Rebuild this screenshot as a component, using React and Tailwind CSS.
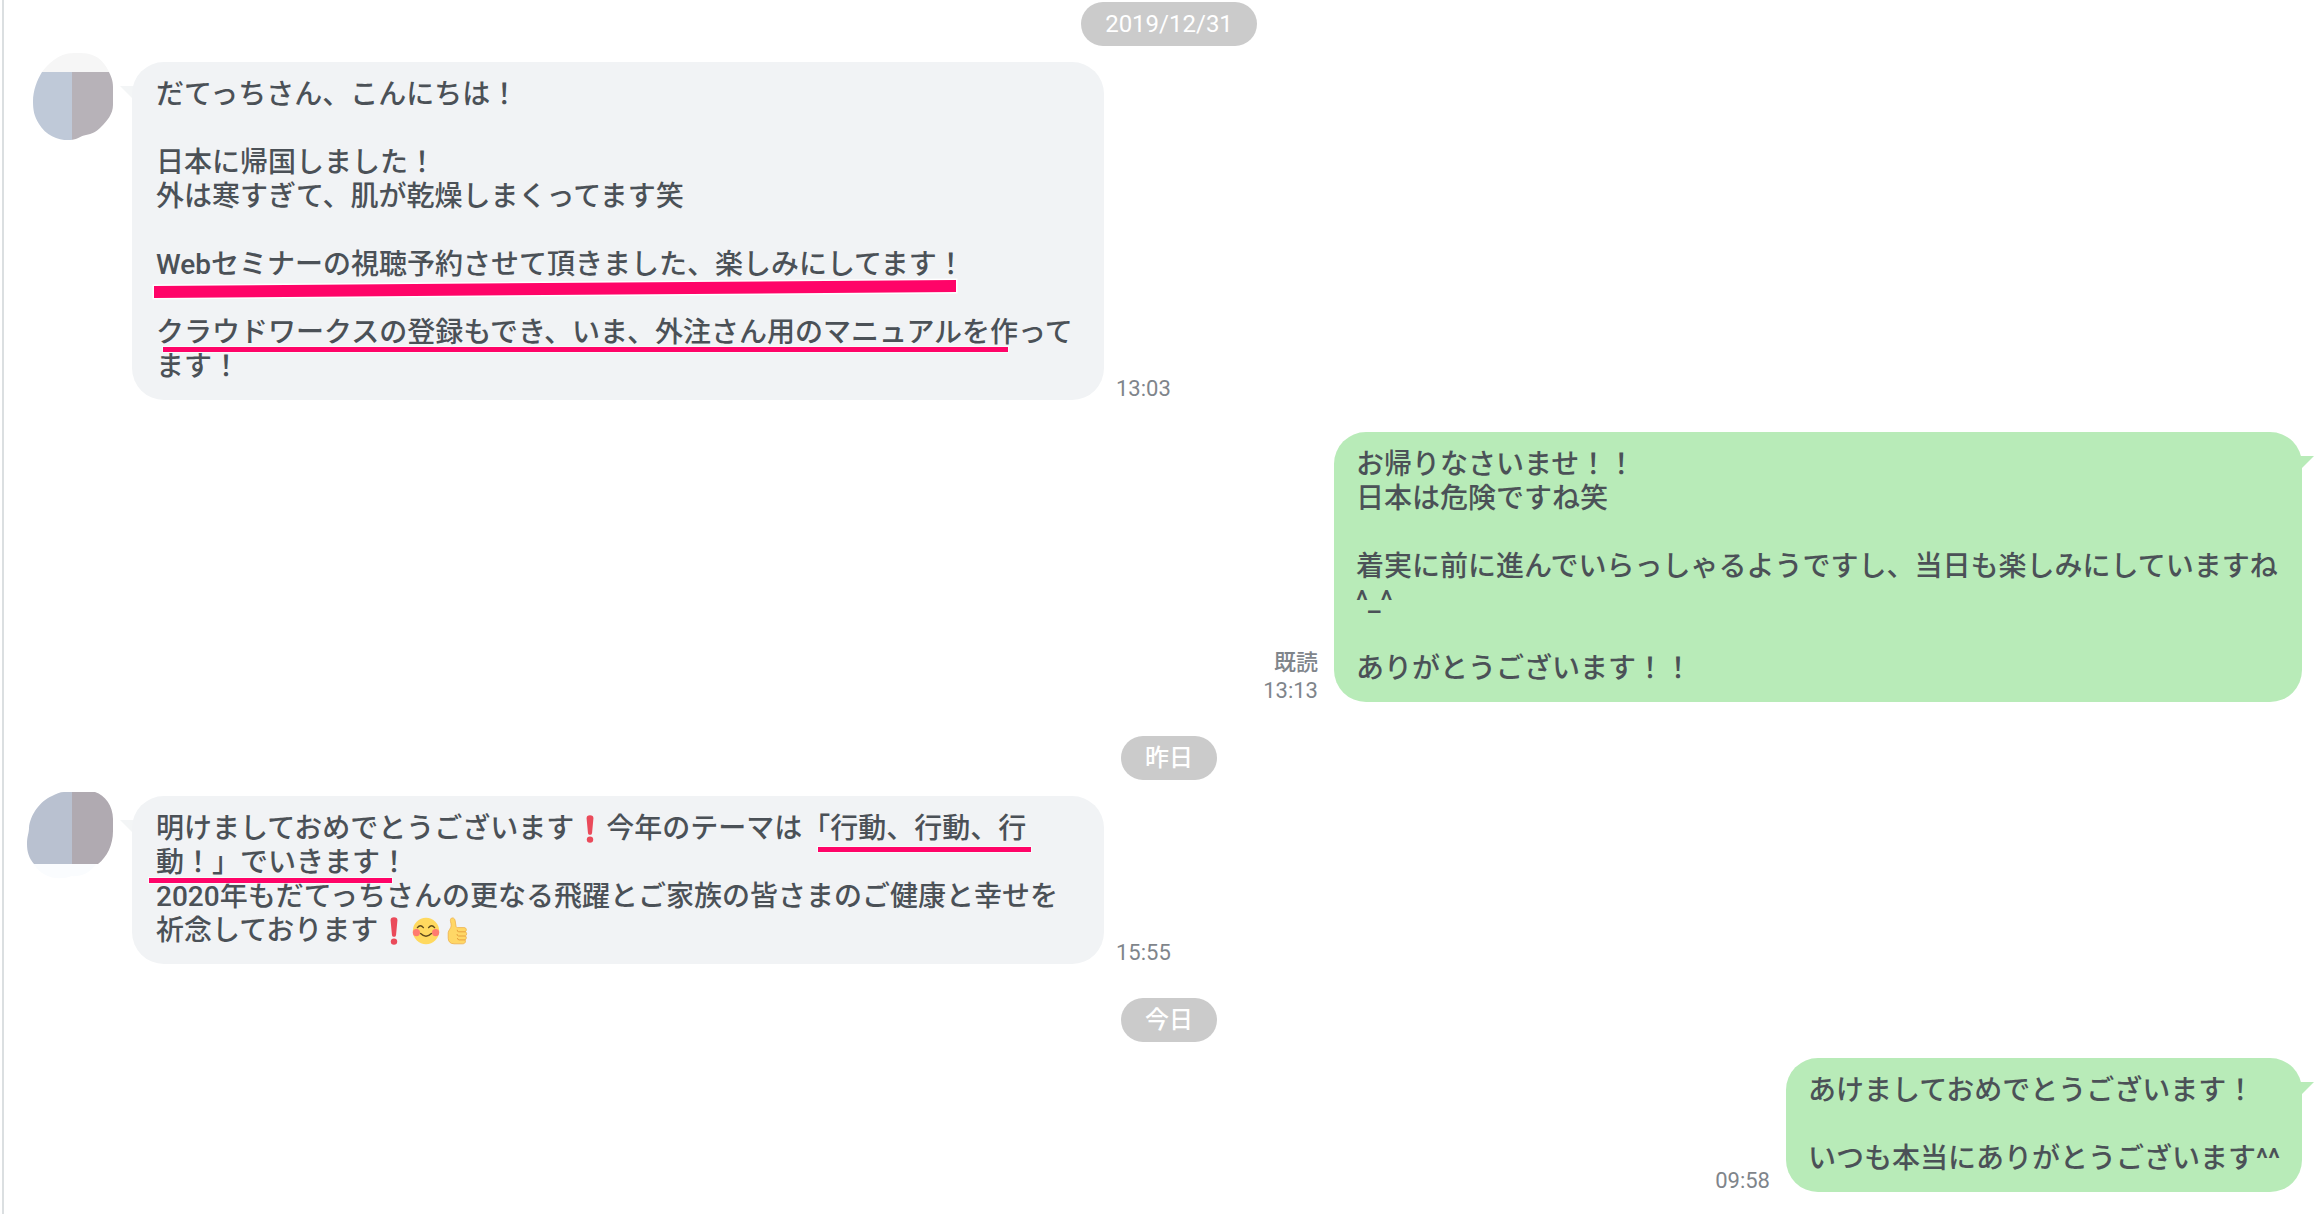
const PINK = "#ff0468";

function Exclamation() {
  return (
    <svg viewBox="0 0 32 28" role="img" aria-label="!" className="inline-block h-7 w-8 align-[-5px]">
      <path d="M12.6 3.4C12.4 1 13.8 0.2 16 0.2s3.6.8 3.4 3.2l-1.3 14c-.2 1.9-1 2.4-2.1 2.4s-1.9-.5-2.1-2.4z" fill="#ea4a5a" />
      <circle cx="16" cy="24.6" r="3.2" fill="#ea4a5a" />
    </svg>
  );
}

function Smile() {
  return (
    <svg viewBox="0 0 32 28" role="img" aria-label="smile" className="inline-block h-7 w-8 align-[-5px]">
      <circle cx="16" cy="14" r="13.2" fill="#ffd95f" />
      <circle cx="6.4" cy="15.6" r="3.6" fill="#ff7b70" />
      <circle cx="25.6" cy="15.6" r="3.6" fill="#ff7b70" />
      <g fill="none" stroke="#5f4a1c" strokeWidth="1.4" strokeLinecap="round">
        <path d="M7.4 10.6q3-3.6 6 0M18.6 10.6q3-3.6 6 0" />
        <path d="M10.6 16.6q5.4 5.4 10.8 0" />
      </g>
    </svg>
  );
}

function ThumbsUp() {
  return (
    <svg viewBox="0 0 32 28" role="img" aria-label="thumbs up" className="inline-block h-7 w-8 align-[-5px]">
      <path
        d="M9.4 1.2c1.6-.8 3.4.2 3.7 2.2l.9 5.8c.2 1 .7 1.4 1.6 1.4h6.3c1.7 0 2.4 1 2.4 2.1s-.4 1.7-1 2.1c1.1.4 1.4 1.2 1.3 2.2s-.5 1.7-1.2 2c.8.5 1 1.2.9 2.1-.1.9-.6 1.5-1.3 1.8.5.5.6 1.1.4 1.9-.3 1.3-1.3 2-2.8 2H12c-3.6 0-5.8-2.2-5.8-5.6v-5.4c0-2.2 2.8-4.6 3-6.9.1-1.6-.4-3-.7-4.4-.3-1.5 0-2.7.9-3.3z"
        fill="#ffd766"
        stroke="#eeb04a"
        strokeWidth="0.8"
      />
      <path
        d="M23 14.8h-6.2q-1.6.1-1.6-1.6M23.2 19h-6.6q-1.6-.1-1.6-1.6M22.8 22.9h-5.6q-1.7-.1-1.8-1.5"
        fill="none"
        stroke="#e8a23e"
        strokeWidth="1"
        strokeLinecap="round"
      />
    </svg>
  );
}

function AvatarMorning() {
  return (
    <svg viewBox="36 40 96 100" aria-hidden="true" className="-mt-[22px] h-[100px] w-24 shrink-0 overflow-visible">
      <clipPath id="avatar-a">
        <path d="M66 54C71 52.6 84 52.6 89 54C98 56 104 62 108 70C111 76 113 80 113 87V105C113 114 107 121 101 127C96 132 92 134 86 135C80 136 79 139 71 140C60 141 46 136 39 124C34 116 33 110 33 101C33 91 37 80 42 72C48 64 57 56 66 54Z" />
      </clipPath>
      <g clipPath="url(#avatar-a)">
        <rect x="30" y="50" width="90" height="22" fill="#f6f6f6" />
        <rect x="30" y="72" width="42" height="70" fill="#bfc9d8" />
        <rect x="72" y="72" width="44" height="70" fill="#b7b2b8" />
      </g>
      <path d="M120 86h18l-6 12z" fill="#f3f5f6" />
    </svg>
  );
}

function AvatarEvening() {
  return (
    <svg viewBox="36 774 96 100" aria-hidden="true" className="-mt-[22px] h-[100px] w-24 shrink-0 overflow-visible">
      <path d="M34 864h62C90 874 78 877 72 876C58 881 42 878 34 864Z" fill="#fafcfe" />
      <clipPath id="avatar-b">
        <path d="M64 792H95C105 795 113 806 113 819V831C113 845 107 857 98 864H34C29 858 27 852 27 844C27 836 29 833 29 828C30 815 40 801 52 796C56 794 60 792 64 792Z" />
      </clipPath>
      <g clipPath="url(#avatar-b)">
        <rect x="24" y="790" width="48" height="76" fill="#b9c1d0" />
        <rect x="72" y="790" width="44" height="76" fill="#b0aab1" />
      </g>
      <path d="M120 820h18l-6 12z" fill="#f3f5f6" />
    </svg>
  );
}

function DateDivider({ children }) {
  return (
    <div className="flex justify-center">
      <span className="rounded-full bg-[#cbcbcb] px-6 text-[24px] leading-[44px] text-white">{children}</span>
    </div>
  );
}

function Received({ avatar, time, marks, children }) {
  return (
    <div className="mt-4 flex items-start">
      {avatar}
      <div className="flex items-end gap-3">
        <div className="relative max-w-[972px] rounded-[32px] bg-[#f1f3f5] px-6 py-4">
          <p className="whitespace-pre-line">{children}</p>
          <svg aria-hidden="true" className="pointer-events-none absolute inset-0 h-full w-full">
            {marks}
          </svg>
        </div>
        <time className="-mb-[3px] text-[22px] leading-7 font-normal text-[#7f858b]">{time}</time>
      </div>
    </div>
  );
}

function Sent({ time, read, children }) {
  return (
    <div className="flex items-end justify-end gap-4">
      <div className="-mb-[3px] shrink-0 text-right text-[22px] leading-7 text-[#7f858b]">
        {read && <p>既読</p>}
        <time className="font-normal">{time}</time>
      </div>
      <div className="relative max-w-[968px] rounded-[32px] bg-[#b8ebb8] px-[22px] py-4">
        <p className="whitespace-pre-line">{children}</p>
        <svg viewBox="0 0 18 12" aria-hidden="true" className="absolute top-6 -right-3 h-3 w-[18px]">
          <path d="M0 0h18L6 12z" fill="#b8ebb8" />
        </svg>
      </div>
    </div>
  );
}

export default function App() {
  return (
    <main className="ml-[2px] min-h-screen border-l-2 border-[#dbdfe1] bg-white pt-[2px] pr-[18px] pb-5 pl-8 font-['Roboto','Noto_Sans_CJK_JP',sans-serif] text-[28px] leading-[34px] font-medium text-[#4b5157]" lang="ja">
      <DateDivider>
        <time className="font-normal">2019/12/31</time>
      </DateDivider>

      <Received
        avatar={<AvatarMorning />}
        time="13:03"
        marks={
          <>
            <path d="M22 224L824 218V230L22 236Z" fill={PINK} stroke="#fff" strokeWidth="3" paintOrder="stroke" />
            <path d="M31 285H876V290H31Z" fill={PINK} stroke="#fff" strokeOpacity="0.6" strokeWidth="2" paintOrder="stroke" />
          </>
        }
      >
        {`だてっちさん、こんにちは！

日本に帰国しました！
外は寒すぎて、肌が乾燥しまくってます笑

Webセミナーの視聴予約させて頂きました、楽しみにしてます！

クラウドワークスの登録もでき、いま、外注さん用のマニュアルを作ってます！`}
      </Received>

      <div className="mt-8 mb-[34px]">
        <Sent time="13:13" read>
          {`お帰りなさいませ！！
日本は危険ですね笑

着実に前に進んでいらっしゃるようですし、当日も楽しみにしていますね^_^

ありがとうございます！！`}
        </Sent>
      </div>

      <DateDivider>昨日</DateDivider>

      <Received
        avatar={<AvatarEvening />}
        time="15:55"
        marks={
          <>
            <path d="M686 51H899V56H686Z" fill={PINK} stroke="#fff" strokeOpacity="0.6" strokeWidth="2" paintOrder="stroke" />
            <path d="M17 82H260V87H17Z" fill={PINK} stroke="#fff" strokeOpacity="0.6" strokeWidth="2" paintOrder="stroke" />
          </>
        }
      >
        明けましておめでとうございます
        <Exclamation />
        今年のテーマは「行動、行動、行
        <br />
        {`動！」でいきます！
2020年もだてっちさんの更なる飛躍とご家族の皆さまのご健康と幸せを祈念しております`}
        <Exclamation />
        <Smile />
        <ThumbsUp />
      </Received>

      <div className="mt-[34px]">
        <DateDivider>今日</DateDivider>
      </div>

      <div className="mt-4">
        <Sent time="09:58">
          {`あけましておめでとうございます！

いつも本当にありがとうございます^^`}
        </Sent>
      </div>
    </main>
  );
}
